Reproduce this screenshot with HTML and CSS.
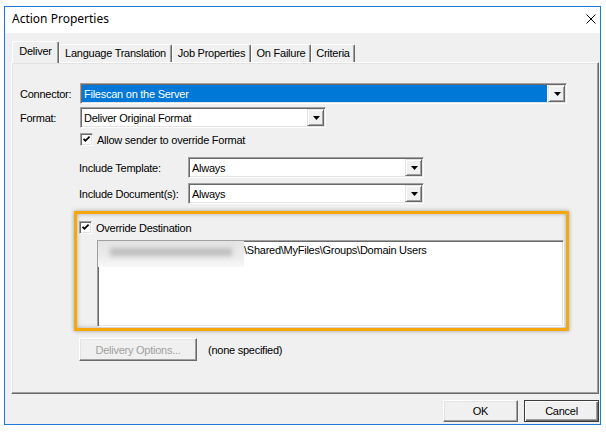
FILE: index.html
```html
<!DOCTYPE html>
<html>
<head>
<meta charset="utf-8">
<title>Action Properties</title>
<link rel="stylesheet" href="styles.css">
</head>
<body>
<div class="window">
  <div class="titlebar">
    <span class="title">Action Properties</span>
    <svg class="close" width="10" height="10" viewBox="0 0 10 10"><path d="M0.5 0.5 L9.5 9.5 M9.5 0.5 L0.5 9.5" stroke="#000" stroke-width="1" fill="none"/></svg>
  </div>
  <div class="client">
    <div class="tabs">
      <div class="tab tab-active tab-deliver">Deliver</div>
      <div class="tab tab-lang">Language Translation</div>
      <div class="tab tab-job">Job Properties</div>
      <div class="tab tab-fail">On Failure</div>
      <div class="tab tab-crit">Criteria</div>
    </div>
    <div class="panel">
      <div class="row">
        <span class="lbl lbl-main">Connector:</span>
        <div class="combo combo-connector">
          <span class="combo-value combo-value-selected">Filescan on the Server</span>
          <span class="combo-btn"><svg width="7" height="4" viewBox="0 0 7 4"><path d="M0 0 H7 L3.5 4 Z" fill="#000"/></svg></span>
        </div>
      </div>
      <div class="row row-format">
        <span class="lbl lbl-main">Format:</span>
        <div class="combo combo-format">
          <span class="combo-value">Deliver Original Format</span>
          <span class="combo-btn"><svg width="7" height="4" viewBox="0 0 7 4"><path d="M0 0 H7 L3.5 4 Z" fill="#000"/></svg></span>
        </div>
      </div>
      <div class="check-row check-row-allow">
        <span class="checkbox"><svg width="9" height="9" viewBox="0 0 9 9"><path d="M1.5 3.8 L3.4 5.8 L7.6 1.6" stroke="#000" stroke-width="1.8" fill="none"/></svg></span>
        <span class="check-label">Allow sender to override Format</span>
      </div>
      <div class="row row-include row-include-first">
        <span class="lbl lbl-include">Include Template:</span>
        <div class="combo combo-include">
          <span class="combo-value">Always</span>
          <span class="combo-btn"><svg width="7" height="4" viewBox="0 0 7 4"><path d="M0 0 H7 L3.5 4 Z" fill="#000"/></svg></span>
        </div>
      </div>
      <div class="row row-include">
        <span class="lbl lbl-include">Include Document(s):</span>
        <div class="combo combo-include">
          <span class="combo-value">Always</span>
          <span class="combo-btn"><svg width="7" height="4" viewBox="0 0 7 4"><path d="M0 0 H7 L3.5 4 Z" fill="#000"/></svg></span>
        </div>
      </div>
      <div class="highlight">
        <div class="check-row">
          <span class="checkbox"><svg width="9" height="9" viewBox="0 0 9 9"><path d="M1.5 3.8 L3.4 5.8 L7.6 1.6" stroke="#000" stroke-width="1.8" fill="none"/></svg></span>
          <span class="check-label">Override Destination</span>
        </div>
        <div class="textbox">
          <span class="redacted"><span class="redacted-smudge"></span></span>
          <span class="path">\Shared\MyFiles\Groups\Domain Users</span>
        </div>
      </div>
      <div class="row row-delivery">
        <span class="btn btn-disabled btn-delivery">Delivery Options...</span>
        <span class="none-label">(none specified)</span>
      </div>
    </div>
    <div class="footer">
      <span class="btn btn-dialog">OK</span>
      <span class="btn btn-dialog btn-default">Cancel</span>
    </div>
  </div>
</div>
</body>
</html>
```
FILE: styles.css
```css
html, body {
  margin: 0;
  padding: 0;
  background: #ffffff;
}
body {
  font-family: "Liberation Sans", Arial, sans-serif;
  font-size: 11px;
  letter-spacing: -0.25px;
  color: #000;
}
.window {
  margin: 6px 0 0 4px;
  width: 597px;
  height: 419px;
  box-sizing: border-box;
  border: 1px solid #1d7ad9;
  background: #f0f0f0;
  display: flex;
  flex-direction: column;
}
.titlebar {
  height: 26px;
  box-sizing: border-box;
  background: #fff;
  display: flex;
  align-items: center;
  justify-content: space-between;
  padding: 0 4px 3px 7px;
}
.title {
  font-family: "Noto Sans", "Open Sans", sans-serif;
  font-size: 12px;
  letter-spacing: 0;
  color: #000;
}
.client {
  flex: 1;
  padding: 8px 1px 0 6px;
  display: flex;
  flex-direction: column;
}
.tabs {
  display: flex;
  align-items: flex-end;
  height: 22px;
  margin: 0 0 -1px 1px;
  position: relative;
  z-index: 1;
}
.tab {
  height: 18px;
  box-sizing: border-box;
  border-top: 1px solid #fff;
  border-left: 1px solid #fff;
  border-right: 1px solid #696969;
  box-shadow: inset -1px 0 #a0a0a0;
  border-radius: 2px 2px 0 0;
  margin-bottom: 1px;
  line-height: 16px;
  text-align: center;
  background: #f0f0f0;
  white-space: nowrap;
}
.tab-active {
  height: 22px;
  margin-bottom: 0;
  line-height: 19px;
}
.tab-deliver { width: 47px; }
.tab-lang { width: 113px; }
.tab-job { width: 79px; }
.tab-fail { width: 60px; }
.tab-crit { width: 44px; }
.panel {
  height: 332px;
  box-sizing: border-box;
  border-top: 1px solid #fff;
  border-left: 1px solid #fff;
  border-right: 1px solid #696969;
  border-bottom: 1px solid #696969;
  box-shadow: inset -1px -1px #a0a0a0, inset 1px 1px #e3e3e3;
  padding: 20px 8px 0 8px;
  display: flex;
  flex-direction: column;
  align-items: flex-start;
}
.row {
  display: flex;
  align-items: center;
}
.row-format { margin-top: 3px; }
.lbl-main { width: 60px; }
.row-include { margin-left: 59px; margin-top: 5px; }
.row-include-first { margin-top: 11px; }
.lbl-include { width: 109px; }
.combo {
  height: 21px;
  box-sizing: border-box;
  border-top: 1px solid #a0a0a0;
  border-left: 1px solid #a0a0a0;
  border-right: 1px solid #fff;
  border-bottom: 1px solid #fff;
  box-shadow: inset 1px 1px #696969, inset -1px -1px #e3e3e3;
  background: #fff;
  display: flex;
  align-items: stretch;
  padding: 1px;
}
.combo-connector { width: 487px; }
.combo-format { width: 246px; }
.combo-include { width: 236px; }
.combo-value {
  flex: 1;
  display: flex;
  align-items: center;
  padding-left: 2px;
  margin-right: 1px;
  white-space: nowrap;
  overflow: hidden;
}
.combo-value-selected {
  background: #0078d7;
  color: #fff;
}
.combo-btn {
  width: 17px;
  box-sizing: border-box;
  background: #f0f0f0;
  border-top: 1px solid #e3e3e3;
  border-left: 1px solid #e3e3e3;
  border-right: 1px solid #696969;
  border-bottom: 1px solid #696969;
  box-shadow: inset 1px 1px #fff, inset -1px -1px #a0a0a0;
  display: flex;
  align-items: center;
  justify-content: center;
}
.combo-btn svg { display: block; margin-left: 1px; }
.check-row {
  display: flex;
  align-items: center;
  height: 13px;
}
.check-row-allow { margin: 5px 0 0 60px; }
.checkbox {
  width: 13px;
  height: 13px;
  box-sizing: border-box;
  border-top: 1px solid #a0a0a0;
  border-left: 1px solid #a0a0a0;
  border-right: 1px solid #fff;
  border-bottom: 1px solid #fff;
  box-shadow: inset 1px 1px #696969, inset -1px -1px #e3e3e3;
  background: #fff;
  padding: 1px;
  display: flex;
}
.checkbox svg { display: block; }
.check-label { margin-left: 4px; white-space: nowrap; }
.highlight {
  margin: 7px 0 0 54px;
  width: 495px;
  height: 120px;
  box-sizing: border-box;
  border: 3px solid #f7a707;
  box-shadow: 0 0 4px rgba(0,0,0,0.35), inset 0 0 4px rgba(0,0,0,0.3);
  padding: 7px 2px 0 2px;
}
.textbox {
  margin: 6px 0 0 18px;
  width: 467px;
  height: 87px;
  box-sizing: border-box;
  border-top: 1px solid #a0a0a0;
  border-left: 1px solid #a0a0a0;
  border-right: 1px solid #fff;
  border-bottom: 1px solid #fff;
  box-shadow: inset 1px 1px #696969, inset -1px -1px #e3e3e3;
  background: #fff;
  display: flex;
  align-items: flex-start;
  overflow: hidden;
}
.redacted {
  width: 147px;
  height: 26px;
  margin: 0 0 0 -1px;
  background: linear-gradient(to bottom, #e4e4e4 0%, #ececec 60%, #f8f8f8 100%);
  display: flex;
  align-items: flex-start;
  padding-top: 7px;
  box-sizing: border-box;
}
.redacted-smudge {
  display: block;
  width: 122px;
  height: 8px;
  margin-left: 13px;
  background: #bdbdbd;
  filter: blur(2.5px);
}
.path {
  padding-top: 3px;
  white-space: nowrap;
}
.row-delivery { margin: 7px 0 0 59px; }
.btn {
  box-sizing: border-box;
  background: #f0f0f0;
  border-top: 1px solid #fff;
  border-left: 1px solid #fff;
  border-right: 1px solid #696969;
  border-bottom: 1px solid #696969;
  box-shadow: inset -1px -1px #a0a0a0, inset 1px 1px #e3e3e3;
  display: flex;
  align-items: center;
  justify-content: center;
  white-space: nowrap;
}
.btn-delivery {
  width: 118px;
  height: 23px;
}
.btn-disabled { color: #a0a0a0; }
.none-label { margin-left: 11px; }
.footer {
  display: flex;
  justify-content: flex-end;
  gap: 6px;
  margin-top: 6px;
}
.btn-dialog {
  width: 75px;
  height: 22px;
}
.btn-default {
  border: 1px solid #3c3c3c;
  box-shadow: inset 1px 1px #fff, inset -1px -1px #696969, inset -2px -2px #a0a0a0;
}
```
